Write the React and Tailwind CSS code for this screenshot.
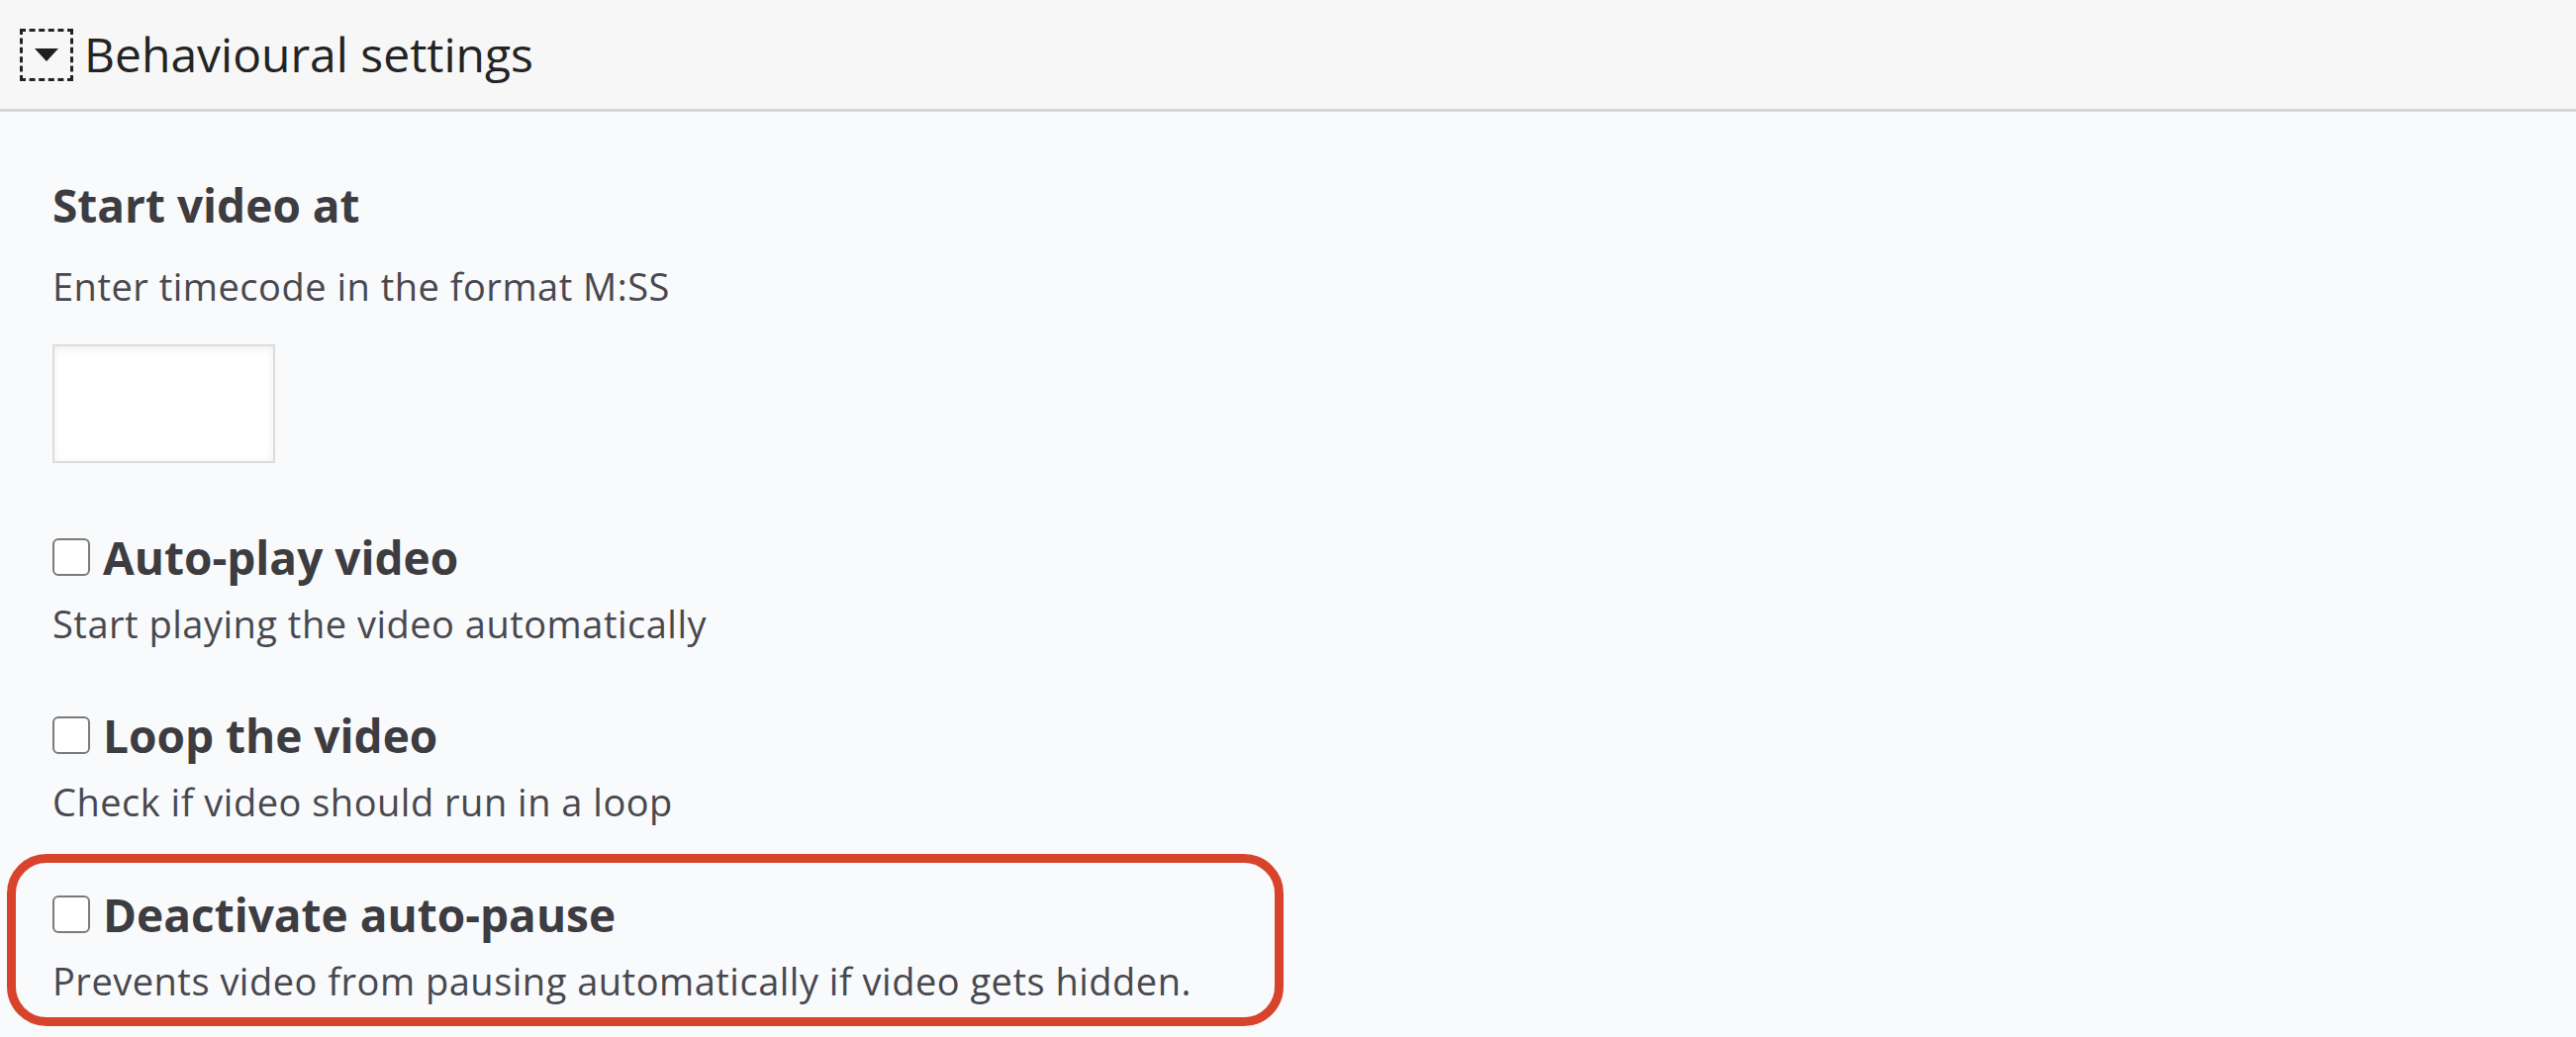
import React from 'react';

function CheckItem({ label, description, highlight }) {
    return (
        <div className="relative">
            {highlight && (
                <div className="pointer-events-none absolute -top-[30px] -left-[46px] w-[1290px] h-[174px] rounded-[40px] border-[9px] border-[#d8432c]"></div>
            )}
            <label className="flex items-center gap-[13px]">
                <input type="checkbox" className="appearance-none w-[38px] h-[38px] rounded-[6px] border-2 border-[#7a7a7a] bg-white shrink-0" />
                <span className="text-[46px] leading-[62px] font-bold text-[#3c3c41]">{label}</span>
            </label>
            <p className="mt-[10px] text-[38px] leading-[52px] tracking-[0.5px] text-[#48484f]">{description}</p>
        </div>
    );
}

export default function App() {
    return (
        <div className="min-h-screen bg-[#f9fafc]" style={{ fontFamily: '"Open Sans", "Noto Sans", sans-serif' }}>
            <div className="h-[113px] bg-[#f7f7f7] border-b-[3px] border-[#d5d6d8] flex items-center pl-[20px] gap-[11px]">
                <div className="w-[54px] h-[53px] border-[3px] border-dashed border-[#222] flex items-center justify-center">
                    <svg width="24" height="13" viewBox="0 0 24 13">
                        <polygon points="0,0 24,0 12,13" fill="#1f1f1f" />
                    </svg>
                </div>
                <span className="text-[48px] leading-[66px] text-[#232323]">Behavioural settings</span>
            </div>

            <div className="pl-[53px] pt-[63px]">
                <h3 className="text-[46px] leading-[62px] font-bold text-[#3c3c41]">Start video at</h3>
                <p className="mt-[25px] text-[38px] leading-[52px] tracking-[0.5px] text-[#48484f]">Enter timecode in the format M:SS</p>
                <input type="text" className="mt-[33px] block w-[225px] h-[120px] bg-white border-2 border-[#dcdcdc] shadow-[inset_0_2px_8px_rgba(0,0,0,0.07)] outline-none" />

                <div className="mt-[64px]">
                    <CheckItem label="Auto-play video" description="Start playing the video automatically" />
                </div>
                <div className="mt-[56px]">
                    <CheckItem label="Loop the video" description="Check if video should run in a loop" />
                </div>
                <div className="mt-[57px]">
                    <CheckItem label="Deactivate auto-pause" description="Prevents video from pausing automatically if video gets hidden." highlight />
                </div>
            </div>
        </div>
    );
}
